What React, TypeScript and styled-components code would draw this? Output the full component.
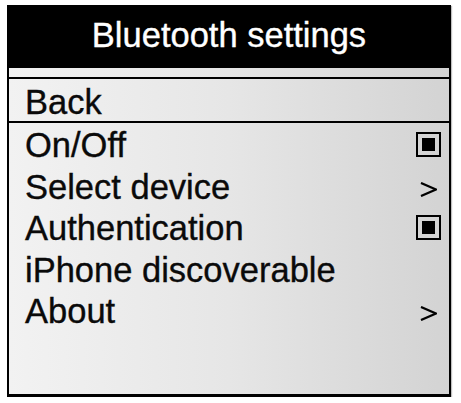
import React from "react";
import styled, { createGlobalStyle } from "styled-components";

const Global = createGlobalStyle`
  html, body { margin: 0; padding: 0; background: #ffffff; }
  body { font-family: "Liberation Sans", Arial, Helvetica, sans-serif; }
`;

const Frame = styled.div`
  box-sizing: border-box;
  width: 444px;
  height: 392px;
  margin: 5px 0 0 7px;
  border: 2px solid #000;
  border-bottom-width: 3px;
  background: linear-gradient(90deg, #f2f2f2 0%, #e6e6e6 50%, #d3d3d3 100%);
  box-shadow: 1px 1px 1px rgba(0, 0, 0, 0.25);
  display: flex;
  flex-direction: column;
  font-size: 34.5px;
  color: #0a0a0a;
  -webkit-text-stroke: 0.35px currentColor;
`;

const Header = styled.div`
  box-sizing: border-box;
  height: 61px;
  padding-bottom: 5px;
  background: #000;
  color: #fff;
  display: flex;
  align-items: center;
  justify-content: center;
  line-height: 38px;
`;

const Strip = styled.div`
  height: 9px;
  border-bottom: 2px solid #000;
`;

const BackRow = styled.div`
  box-sizing: border-box;
  height: 44px;
  padding: 3px 16px 0;
  border-bottom: 2px solid #000;
  line-height: 40px;
`;

const List = styled.div`
  display: flex;
  flex-direction: column;
`;

const Row = styled.div`
  height: 41.5px;
  line-height: 41.5px;
  padding: 0 8px 0 16px;
  display: flex;
  align-items: center;
  justify-content: space-between;
`;

const Label = styled.span`
  white-space: nowrap;
  margin-top: 4px;
`;

const Marker = styled.span`
  width: 25px;
  height: 25px;
  display: flex;
  align-items: center;
  justify-content: center;
  margin-top: 2px;
`;

const Check = styled.span`
  box-sizing: border-box;
  width: 25px;
  height: 25px;
  border: 2px solid #000;
  display: flex;
  align-items: center;
  justify-content: center;
  &::after {
    content: "";
    width: 13px;
    height: 13px;
    background: #000;
  }
`;

const Chevron = () => (
  <svg width="17" height="15" viewBox="0 0 17 15" style={{ marginTop: 6 }}>
    <polyline points="1,1 16,7.5 1,14" fill="none" stroke="#000" strokeWidth="2.3" strokeLinejoin="miter" />
  </svg>
);

type Kind = "check" | "arrow" | "none";
const items: { label: string; kind: Kind }[] = [
  { label: "On/Off", kind: "check" },
  { label: "Select device", kind: "arrow" },
  { label: "Authentication", kind: "check" },
  { label: "iPhone discoverable", kind: "none" },
  { label: "About", kind: "arrow" },
];

export default function App() {
  return (
    <>
      <Global />
      <Frame>
        <Header>Bluetooth settings</Header>
        <Strip />
        <BackRow>Back</BackRow>
        <List>
          {items.map((it) => (
            <Row key={it.label}>
              <Label>{it.label}</Label>
              <Marker>
                {it.kind === "check" && <Check />}
                {it.kind === "arrow" && <Chevron />}
              </Marker>
            </Row>
          ))}
        </List>
      </Frame>
    </>
  );
}
